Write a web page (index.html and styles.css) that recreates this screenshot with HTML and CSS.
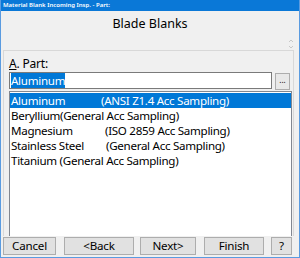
FILE: index.html
```html
<!DOCTYPE html>
<html lang="en">
<head>
    <meta charset="UTF-8">
    <title>Material Blank Incoming Insp. - Part:</title>
    <link rel="stylesheet" href="styles.css">
</head>
<body>
    <div class="window">
        <div class="titlebar">Material Blank Incoming Insp. - Part:</div>
        <div class="header">
            <div class="heading">Blade Blanks</div>
            <div class="spinner">
                <svg width="6" height="12" viewBox="0 0 6 12">
                    <path d="M1 4 L3 2 L5 4" fill="none" stroke="#c8c8c8" stroke-width="1"/>
                    <path d="M1 8 L3 10 L5 8" fill="none" stroke="#c8c8c8" stroke-width="1"/>
                </svg>
            </div>
        </div>
        <div class="group">
            <div class="label"><u>A</u>. Part:</div>
            <div class="input-row">
                <div class="input"><span class="sel">Aluminum</span></div>
                <div class="browse">...</div>
            </div>
            <div class="listbox">
                <div class="item selected"><span class="name">Aluminum</span><span>(ANSI Z1.4 Acc Sampling)</span></div>
                <div class="item">Beryllium(General Acc Sampling)</div>
                <div class="item"><span class="name wide">Magnesium</span><span>(ISO 2859 Acc Sampling)</span></div>
                <div class="item"><span class="name wider">Stainless Steel</span><span>(General Acc Sampling)</span></div>
                <div class="item">Titanium (General Acc Sampling)</div>
            </div>
        </div>
        <div class="buttons">
            <div class="btn btn-cancel">Cancel</div>
            <div class="btn btn-back">&lt;Back</div>
            <div class="btn btn-next">Next&gt;</div>
            <div class="btn btn-finish">Finish</div>
            <div class="btn btn-help">?</div>
        </div>
    </div>
</body>
</html>
```

FILE: styles.css
```css
body {
    margin: 0;
    padding: 0;
    font-family: "Noto Sans", "Open Sans", sans-serif;
    color: #000;
}
.window {
    width: 300px;
    height: 258px;
    box-sizing: border-box;
    background-color: #f0f0f0;
    border-left: 1px solid #5a9be0;
    border-right: 1px solid #5a9be0;
    border-bottom: 1px solid #5a9be0;
    display: flex;
    flex-direction: column;
    overflow: hidden;
}
.titlebar {
    height: 11px;
    background-color: #0a78d7;
    color: #fff;
    font-size: 6px;
    font-weight: 600;
    line-height: 11px;
    padding-left: 2px;
    white-space: nowrap;
}
.header {
    height: 39px;
    display: flex;
    position: relative;
}
.heading {
    flex: 1;
    text-align: center;
    font-size: 12.5px;
    padding-top: 4px;
}
.spinner {
    position: absolute;
    right: 5px;
    top: 22px;
}
.group {
    flex: 1;
    margin: 0 5px 0 2px;
    border-top: 1px solid #d8d8d8;
    border-left: 1px solid #d8d8d8;
    border-right: 1px solid #d8d8d8;
    padding: 5px 0 0 5px;
    display: flex;
    flex-direction: column;
}
.label {
    font-size: 12px;
    line-height: 15px;
    margin-bottom: 1px;
    letter-spacing: -0.2px;
}
.input-row {
    display: flex;
    align-items: flex-end;
    gap: 3px;
}
.input {
    width: 263px;
    height: 17px;
    box-sizing: border-box;
    background-color: #fff;
    border: 1px solid #7a7a7a;
    font-size: 11.6px;
    letter-spacing: -0.3px;
    line-height: 15px;
    padding-left: 1px;
}
.sel {
    background-color: #0078d7;
    color: #fff;
}
.browse {
    width: 15px;
    height: 17px;
    box-sizing: border-box;
    background-color: #e8e8e8;
    border: 1px solid #adadad;
    font-size: 8px;
    line-height: 12px;
    text-align: center;
    margin-bottom: -1px;
}
.listbox {
    flex: 1;
    margin-top: 2px;
    width: 283px;
    box-sizing: border-box;
    background-color: #fff;
    border: 1px solid #828790;
    border-bottom: none;
    padding-top: 1px;
}
.item {
    height: 15px;
    font-size: 11.6px;
    letter-spacing: -0.3px;
    line-height: 15px;
    white-space: nowrap;
    padding-left: 1px;
    overflow: hidden;
}
.item .name {
    display: inline-block;
    width: 90px;
}
.item .name.wide {
    width: 94px;
}
.item .name.wider {
    width: 95px;
}
.item.selected {
    background-color: #0078d7;
    color: #fff;
}
.buttons {
    height: 20px;
    display: flex;
    align-items: flex-start;
    padding: 1px 0 0 2px;
}
.btn {
    height: 18px;
    box-sizing: border-box;
    background-color: #e1e1e1;
    border: 1px solid #adadad;
    font-size: 11.6px;
    letter-spacing: -0.2px;
    line-height: 16px;
    text-align: center;
}
.btn-cancel { width: 53px; margin-right: 8px; }
.btn-back { width: 70px; margin-right: 6px; }
.btn-next { width: 56px; margin-right: 8px; }
.btn-finish { width: 60px; margin-right: 7px; }
.btn-help { width: 21px; }
```
